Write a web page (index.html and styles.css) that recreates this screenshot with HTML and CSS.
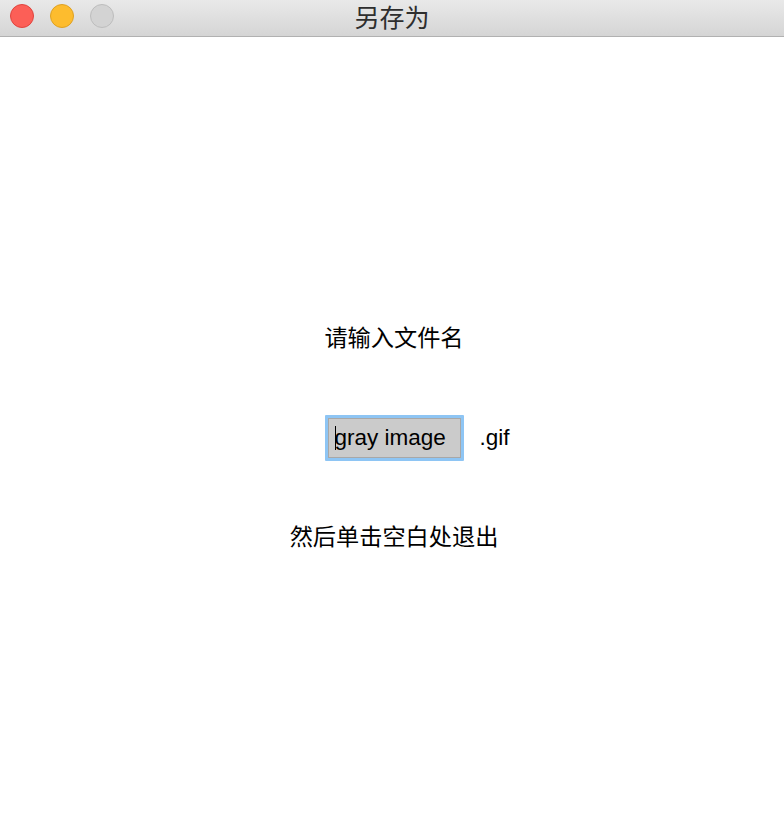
FILE: index.html
```html
<!DOCTYPE html>
<html lang="zh">
<head>
<meta charset="utf-8">
<title>另存为</title>
<link rel="stylesheet" href="styles.css">
</head>
<body>
<div class="window">
  <div class="titlebar">
    <div class="lights">
      <span class="light red"></span>
      <span class="light yellow"></span>
      <span class="light gray"></span>
    </div>
    <div class="title">另存为</div>
  </div>
  <div class="content">
    <div class="label">请输入文件名</div>
    <div class="row">
      <div class="spacer"></div>
      <div class="field"><div class="field-inner"><span class="caret"></span>gray image</div></div>
      <div class="ext">.gif</div>
    </div>
    <div class="label hint">然后单击空白处退出</div>
  </div>
</div>
</body>
</html>
```

FILE: styles.css
```css
html, body {
  margin: 0;
  padding: 0;
  background: #ffffff;
}
body {
  font-family: "Liberation Sans", "Noto Sans CJK SC", sans-serif;
  color: #000;
}
.window {
  width: 784px;
  height: 822px;
  display: flex;
  flex-direction: column;
}
.titlebar {
  height: 36px;
  border-bottom: 1px solid #b1b1b1;
  background: linear-gradient(#e9e9e9, #d5d5d5);
  display: grid;
  grid-template-columns: 1fr auto 1fr;
  align-items: center;
}
.lights {
  display: flex;
  gap: 16px;
  padding-left: 10px;
  padding-bottom: 4px;
}
.light {
  width: 22px;
  height: 22px;
  border-radius: 50%;
  border: 1px solid;
}
.red { background: #fc5f57; border-color: #e0443e; }
.yellow { background: #fdbc2e; border-color: #dea123; }
.gray { background: #d3d3d3; border-color: #bdbdbd; }
.title {
  font-family: "Noto Sans CJK SC", sans-serif;
  font-size: 25px;
  color: #2e2e2e;
  line-height: 36px;
  margin-top: -4px;
}
.content {
  display: flex;
  flex-direction: column;
  align-items: center;
  padding-top: 284px;
  padding-left: 4px;
}
.label {
  font-family: "Noto Sans CJK SC", sans-serif;
  font-size: 23.2px;
  line-height: 30px;
  height: 30px;
}
.row {
  margin-top: 64px;
  align-self: stretch;
  display: grid;
  grid-template-columns: 1fr auto 1fr;
  align-items: center;
}
.field {
  border: 3px solid #8ec5f4;
  border-radius: 1px;
  width: 133px;
  height: 40px;
}
.field-inner {
  box-sizing: border-box;
  height: 100%;
  background: #cbcbcb;
  border: 1px solid #a8a8a8;
  font-size: 22.5px;
  line-height: 36px;
  padding-left: 6px;
  display: flex;
  align-items: center;
  white-space: nowrap;
}
.caret {
  display: inline-block;
  width: 1px;
  height: 24px;
  background: #000;
  margin-right: -1px;
}
.ext {
  font-size: 22.5px;
  padding-left: 16px;
}
.hint {
  margin-top: 59px;
}
```
